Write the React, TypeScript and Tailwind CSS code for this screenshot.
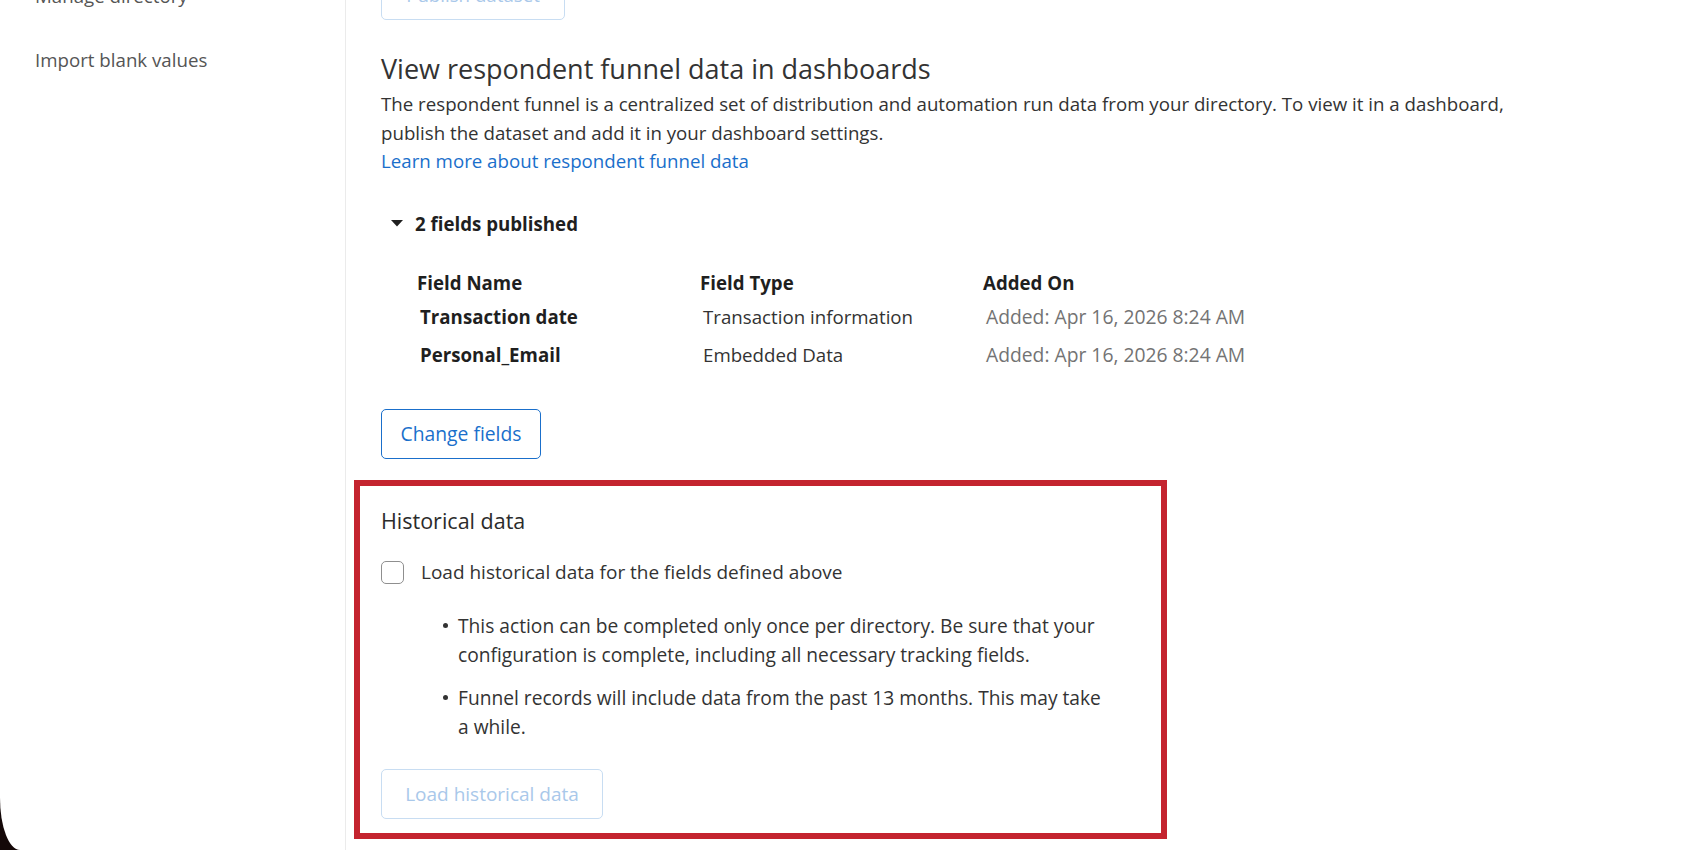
import React from 'react';

const fields = [
  { name: 'Transaction date', type: 'Transaction information', added: 'Added: Apr 16, 2026 8:24 AM' },
  { name: 'Personal_Email', type: 'Embedded Data', added: 'Added: Apr 16, 2026 8:24 AM' },
];

const notes = [
  'This action can be completed only once per directory. Be sure that your configuration is complete, including all necessary tracking fields.',
  'Funnel records will include data from the past 13 months. This may take a while.',
];

function Sidebar() {
  return (
    <div className="w-[346px] shrink-0 border-r border-[#ebebeb]">
      <div className="mt-[-18px] flex flex-col gap-[35px] pl-[35px] text-[18.7px] leading-[28.5px] text-[#555555]">
        <span>Manage directory</span>
        <span>Import blank values</span>
      </div>
    </div>
  );
}

function FieldsTable() {
  return (
    <div className="mt-[31px] pl-[36px] grid grid-cols-[283px_283px_auto] text-[18.7px] leading-[28.5px]">
      <div className="h-[34px] font-bold text-[#1f1f1f]">Field Name</div>
      <div className="h-[34px] font-bold text-[#1f1f1f]">Field Type</div>
      <div className="h-[34px] font-bold text-[#1f1f1f]">Added On</div>
      {fields.map((f) => (
        <React.Fragment key={f.name}>
          <div className="h-[38px] pl-[3px] font-bold text-[#1f1f1f]">{f.name}</div>
          <div className="h-[38px] pl-[3px] text-[#333333]">{f.type}</div>
          <div className="h-[38px] pl-[3px] text-[19.3px] text-[#737373]">{f.added}</div>
        </React.Fragment>
      ))}
    </div>
  );
}

function HistoricalData() {
  return (
    <div className="mt-[21px] -ml-[27px] w-[813px] border-[6px] border-[#c4242f] pt-[20px] pl-[21px] pb-[14px]">
      <h3 className="text-[21.5px] leading-[30px] text-[#2b2b2b]">Historical data</h3>
      <label className="mt-[22px] flex items-center gap-[17px] text-[19px] leading-[28.5px] text-[#333333]">
        <span className="h-[23px] w-[23px] shrink-0 rounded-[5px] border-[1.5px] border-[#8f8f8f] bg-white" />
        Load historical data for the fields defined above
      </label>
      <ul className="mt-[24px] w-[722px] pl-[62px] flex flex-col gap-[14.5px] text-[19.2px] leading-[29px] text-[#333333]">
        {notes.map((n) => (
          <li key={n} className="flex">
            <span className="mt-[12px] h-[5px] w-[5px] shrink-0 rounded-full bg-[#333333]" />
            <span className="ml-[10px]">{n}</span>
          </li>
        ))}
      </ul>
      <button
        disabled
        className="mt-[28px] flex h-[50px] w-[222px] items-center justify-center rounded-[5px] border border-[#c8ddf2] bg-white text-[19px] text-[#a9c8ea]"
      >
        Load historical data
      </button>
    </div>
  );
}

export default function App() {
  return (
    <div className="relative flex h-[850px] w-[1700px] overflow-hidden bg-white font-['Open_Sans',sans-serif]">
      <Sidebar />

      <div className="flex-1 pl-[35px]">
        <button
          disabled
          className="mt-[-30px] flex h-[50px] w-[184px] items-center justify-center rounded-[5px] border border-[#c8ddf2] bg-white text-[18.7px] text-[#a9c8ea]"
        >
          Publish dataset
        </button>

        <h2 className="mt-[31px] text-[27px] leading-[36px] font-normal text-[#333333]">
          View respondent funnel data in dashboards
        </h2>
        <p className="mt-[3px] max-w-[1150px] text-[18.7px] leading-[28.5px] text-[#333333]">
          The respondent funnel is a centralized set of distribution and automation run data from your directory. To view it in a dashboard, publish the dataset and add it in your dashboard settings.
          <a href="#" className="block text-[#1a6fcb]">
            Learn more about respondent funnel data
          </a>
        </p>

        <div className="mt-[34px] flex items-center pl-[10px] text-[18.7px] leading-[28.5px]">
          <svg width="12" height="7" viewBox="0 0 12 7" className="shrink-0">
            <path d="M0 0 L12 0 L6 6.5 Z" fill="#1f1f1f" />
          </svg>
          <span className="ml-[12px] font-bold text-[#1f1f1f]">2 fields published</span>
        </div>

        <FieldsTable />

        <button className="mt-[30px] flex h-[50px] w-[160px] items-center justify-center rounded-[5px] border border-[#1a6fcb] bg-white text-[19.3px] text-[#1a6fcb]">
          Change fields
        </button>

        <HistoricalData />
      </div>

      {/* window corner */}
      <div className="absolute bottom-0 left-0 h-[52px] w-[20px] bg-[#140808]">
        <div className="h-full w-full rounded-bl-[20px_52px] bg-white" />
      </div>
    </div>
  );
}
